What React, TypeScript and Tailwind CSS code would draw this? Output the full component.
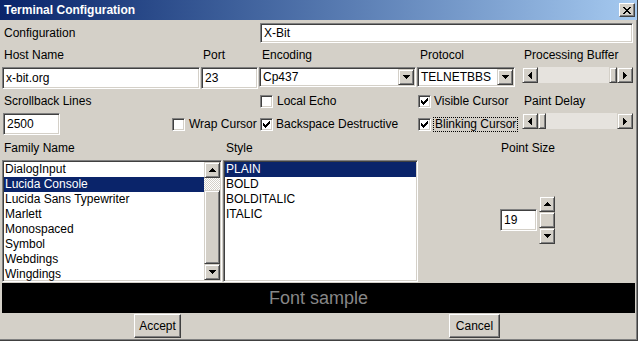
import React from "react";

const SUNKEN =
  "border border-t-[#808080] border-l-[#808080] border-b-white border-r-white shadow-[inset_1px_1px_0_#404040,inset_-1px_-1px_0_#d4d0c8] bg-white";
const RAISED =
  "border border-t-[#d4d0c8] border-l-[#d4d0c8] border-b-[#404040] border-r-[#404040] shadow-[inset_1px_1px_0_#ffffff,inset_-1px_-1px_0_#808080] bg-[#d4d0c8]";
const BUTTON =
  "border border-t-white border-l-white border-b-[#404040] border-r-[#404040] shadow-[inset_-1px_-1px_0_#808080] bg-[#d4d0c8]";

type Dir = "up" | "down" | "left" | "right";

function Arrow({ dir }: { dir: Dir }) {
  if (dir === "up")
    return (
      <svg width="7" height="4" shapeRendering="crispEdges" className="block">
        <path d="M3 0h1v1h-1z M2 1h3v1h-3z M1 2h5v1h-5z M0 3h7v1h-7z" fill="#000" />
      </svg>
    );
  if (dir === "down")
    return (
      <svg width="7" height="4" shapeRendering="crispEdges" className="block">
        <path d="M0 0h7v1h-7z M1 1h5v1h-5z M2 2h3v1h-3z M3 3h1v1h-1z" fill="#000" />
      </svg>
    );
  if (dir === "left")
    return (
      <svg width="4" height="7" shapeRendering="crispEdges" className="block">
        <path d="M0 3h1v1h-1z M1 2h1v3h-1z M2 1h1v5h-1z M3 0h1v7h-1z" fill="#000" />
      </svg>
    );
  return (
    <svg width="4" height="7" shapeRendering="crispEdges" className="block">
      <path d="M0 0h1v7h-1z M1 1h1v5h-1z M2 2h1v3h-1z M3 3h1v1h-1z" fill="#000" />
    </svg>
  );
}

function ArrowBtn({ dir }: { dir: Dir }) {
  return (
    <div className={`${RAISED} w-[16px] h-[16px] flex items-center justify-center shrink-0`}>
      <Arrow dir={dir} />
    </div>
  );
}

function HScroll({ thumbEnd }: { thumbEnd: boolean }) {
  return (
    <div className="w-[111px] h-[16px] flex bg-[#e6e3de] shrink-0">
      <ArrowBtn dir="left" />
      <div className={`flex-1 flex ${thumbEnd ? "justify-end" : "justify-start"}`}>
        <div className={`${RAISED} w-[8px] h-full`} />
      </div>
      <ArrowBtn dir="right" />
    </div>
  );
}

function Check({ checked }: { checked: boolean }) {
  return (
    <div className={`${SUNKEN} w-[13px] h-[13px] p-[1px] shrink-0`}>
      {checked && (
        <svg width="9" height="9" shapeRendering="crispEdges" className="block">
          <path
            d="M7 1h1v1h-1z M6 2h2v1h-2z M1 3h1v1h-1z M5 3h3v1h-3z M1 4h2v1h-2z M4 4h3v1h-3z M1 5h5v1h-5z M2 6h3v1h-3z M3 7h1v1h-1z"
            fill="#000"
          />
        </svg>
      )}
    </div>
  );
}

function Field({ w, h, text }: { w: string; h: string; text: string }) {
  return (
    <div className={`${SUNKEN} ${w} ${h} flex items-center pl-[3px] shrink-0`}>
      <span>{text}</span>
    </div>
  );
}

function Combo({ w, text }: { w: string; text: string }) {
  return (
    <div className={`${SUNKEN} ${w} h-[20px] p-[1px] flex items-center shrink-0`}>
      <span className="flex-1 pl-[2px]">{text}</span>
      <ArrowBtn dir="down" />
    </div>
  );
}

const families = [
  "DialogInput",
  "Lucida Console",
  "Lucida Sans Typewriter",
  "Marlett",
  "Monospaced",
  "Symbol",
  "Webdings",
  "Wingdings",
];
const styles = ["PLAIN", "BOLD", "BOLDITALIC", "ITALIC"];

export default function App() {
  return (
    <div className="w-[638px] h-[341px] bg-[#d4d0c8] flex flex-col overflow-hidden border-r border-b border-r-[#404040] border-b-[#404040] shadow-[inset_-1px_-1px_0_#808080] font-['Liberation_Sans',Arial,sans-serif] text-[12px] text-black leading-none">
      {/* Title bar */}
      <div className="h-[20px] shrink-0 flex items-center justify-between bg-gradient-to-r from-[#0a246a] to-[#a6caf0]">
        <span className="pl-[4px] text-white font-bold text-[12px]">Terminal Configuration</span>
        <div className={`${BUTTON} w-[16px] h-[14px] mr-[2px] flex items-center justify-center`}>
          <svg width="8" height="7" shapeRendering="crispEdges" className="block">
            <path
              d="M0 0h2v1h-2z M6 0h2v1h-2z M1 1h2v1h-2z M5 1h2v1h-2z M2 2h4v1h-4z M3 3h2v1h-2z M2 4h4v1h-4z M1 5h2v1h-2z M5 5h2v1h-2z M0 6h2v1h-2z M6 6h2v1h-2z"
              fill="#000"
            />
          </svg>
        </div>
      </div>

      {/* Configuration row */}
      <div className="mt-[3px] h-[20px] flex items-center shrink-0">
        <div className="w-[260px] pl-[4px]">Configuration</div>
        <Field w="w-[373px]" h="h-[20px]" text="X-Bit" />
      </div>

      {/* labels row */}
      <div className="h-[24px] flex items-center shrink-0">
        <div className="w-[201px] pl-[4px]">Host Name</div>
        <div className="w-[58px] pl-[2px]">Port</div>
        <div className="w-[158px] pl-[3px]">Encoding</div>
        <div className="w-[105px] pl-[3px]">Protocol</div>
        <div className="pl-[2px]">Processing Buffer</div>
      </div>

      {/* fields row */}
      <div className="h-[22px] flex items-start shrink-0">
        <div className="ml-[2px]">
          <Field w="w-[198px]" h="h-[22px]" text="x-bit.org" />
        </div>
        <div className="ml-[1px]">
          <Field w="w-[57px]" h="h-[22px]" text="23" />
        </div>
        <div className="ml-[1px]">
          <Combo w="w-[157px]" text="Cp437" />
        </div>
        <div className="ml-[1px]">
          <Combo w="w-[98px]" text="TELNETBBS" />
        </div>
        <div className="ml-[7px]">
          <HScroll thumbEnd={true} />
        </div>
      </div>

      {/* row 4 */}
      <div className="h-[24px] flex items-center shrink-0">
        <div className="w-[260px] pl-[4px]">Scrollback Lines</div>
        <div className="w-[158px] flex items-center gap-[4px]">
          <Check checked={false} />
          <span>Local Echo</span>
        </div>
        <div className="w-[106px] flex items-center gap-[3px]">
          <Check checked={true} />
          <span>Visible Cursor</span>
        </div>
        <div>Paint Delay</div>
      </div>

      {/* row 5 */}
      <div className="h-[22px] flex items-center shrink-0">
        <div className="ml-[3px]">
          <Field w="w-[57px]" h="h-[22px]" text="2500" />
        </div>
        <div className="ml-[112px] w-[88px] flex items-center gap-[4px]">
          <Check checked={false} />
          <span>Wrap Cursor</span>
        </div>
        <div className="w-[158px] flex items-center gap-[3px]">
          <Check checked={true} />
          <span>Backspace Destructive</span>
        </div>
        <div className="w-[104px] flex items-center gap-[2px]">
          <Check checked={true} />
          <span className="border border-dotted border-black px-[1px] h-[15px] flex items-center">
            Blinking Cursor
          </span>
        </div>
        <div className="self-start">
          <HScroll thumbEnd={false} />
        </div>
      </div>

      {/* row 6 labels */}
      <div className="h-[25px] flex items-center shrink-0">
        <div className="w-[226px] pl-[4px]">Family Name</div>
        <div className="w-[275px]">Style</div>
        <div>Point Size</div>
      </div>

      {/* lists */}
      <div className="h-[123px] flex items-start shrink-0">
        <div className={`${SUNKEN} ml-[2px] w-[220px] h-[122px] p-[1px] flex`}>
          <div className="flex-1 flex flex-col">
            {families.map((f, i) => (
              <div
                key={f}
                className={`h-[15px] leading-[15px] pl-[1px] whitespace-nowrap ${
                  i === 1 ? "bg-[#0a246a] text-white" : ""
                }`}
              >
                {f}
              </div>
            ))}
          </div>
          <div className="w-[16px] h-full flex flex-col">
            <ArrowBtn dir="up" />
            <div className="flex-1 flex flex-col">
              <div className="h-[12px] bg-[repeating-conic-gradient(#ffffff_0_25%,#d4d0c8_0_50%)] bg-[length:2px_2px]" />
              <div className={`${RAISED} flex-1`} />
            </div>
            <ArrowBtn dir="down" />
          </div>
        </div>
        <div className={`${SUNKEN} ml-[1px] w-[195px] h-[122px] p-[1px] flex flex-col`}>
          {styles.map((s, i) => (
            <div
              key={s}
              className={`h-[15px] leading-[15px] pl-[1px] ${i === 0 ? "bg-[#0a246a] text-white" : ""}`}
            >
              {s}
            </div>
          ))}
        </div>
        <div className="ml-[82px] mt-[36px] h-[48px] flex items-center">
          <Field w="w-[37px]" h="h-[22px]" text="19" />
          <div className="ml-[2px] w-[16px] h-[48px] flex flex-col">
            <ArrowBtn dir="up" />
            <div className={`${RAISED} h-[16px]`} />
            <ArrowBtn dir="down" />
          </div>
        </div>
      </div>

      {/* font sample */}
      <div className="mx-[2px] h-[30px] bg-black flex items-center justify-center shrink-0">
        <span className="text-[18px] text-[#878787]">Font sample</span>
      </div>

      {/* buttons */}
      <div className="flex items-start">
        <div className={`${BUTTON} ml-[134px] mt-[1px] w-[47px] h-[24px] flex items-center justify-center`}>
          Accept
        </div>
        <div className={`${BUTTON} ml-[268px] mt-[1px] w-[51px] h-[24px] flex items-center justify-center`}>
          Cancel
        </div>
      </div>
    </div>
  );
}
